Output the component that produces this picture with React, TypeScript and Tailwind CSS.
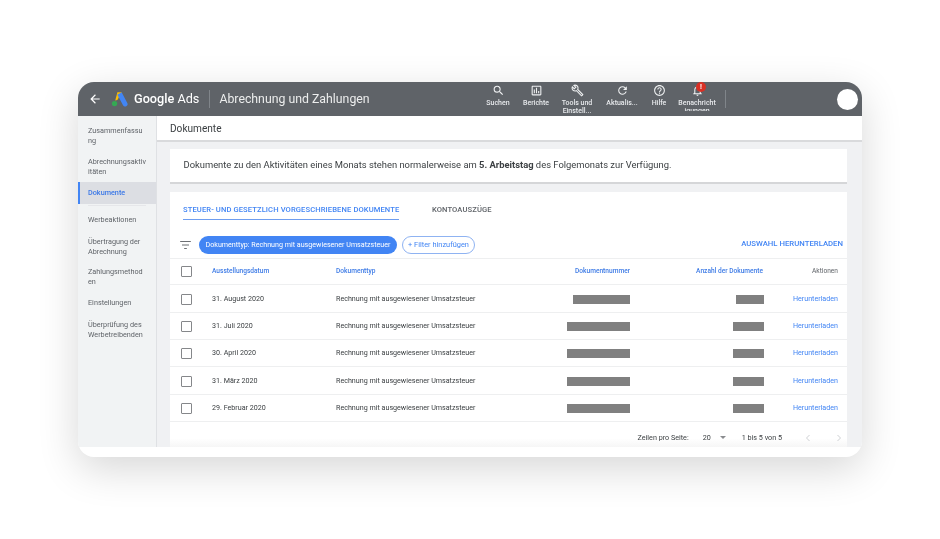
import React from "react";

const Ico = ({ d, className = "w-3 h-3" }: { d: string; className?: string }) => (
  <svg viewBox="0 0 24 24" className={className} fill="currentColor"><path d={d} /></svg>
);

const tools = [
  { label: "Suchen", w: "w-[38px]", d: "M15.5 14h-.79l-.28-.27A6.471 6.471 0 0 0 16 9.5 6.5 6.5 0 1 0 9.5 16c1.61 0 3.09-.59 4.23-1.57l.27.28v.79l5 4.99L20.49 19l-4.99-5zm-6 0C7.01 14 5 11.99 5 9.5S7.01 5 9.5 5 14 7.01 14 9.5 11.99 14 9.5 14z" },
  { label: "Berichte", w: "w-[38px]", d: "M19 3H5c-1.1 0-2 .9-2 2v14c0 1.1.9 2 2 2h14c1.1 0 2-.9 2-2V5c0-1.1-.9-2-2-2zm0 16H5V5h14v14zM7 10h2v7H7zm4-3h2v10h-2zm4 6h2v4h-2z" },
  { label: "Tools und Einstell...", w: "w-[44px]", d: "M22.61 18.99l-9.08-9.08c.93-2.34.45-5.1-1.44-7C9.79.61 6.21.4 3.66 2.25L7.5 6.1 6.08 7.51 2.25 3.69C.39 6.23.6 9.82 2.9 12.11c1.86 1.86 4.57 2.35 6.89 1.48l9.11 9.11c.39.39 1.02.39 1.41 0l2.3-2.3c.4-.38.4-1.01 0-1.41zm-3 1.6l-9.46-9.46c-.61.45-1.29.72-2 .82-1.36.2-2.79-.21-3.83-1.25C3.37 9.76 2.93 8.5 3 7.26l3.09 3.09 4.24-4.24-3.09-3.09c1.24-.07 2.49.37 3.44 1.31 1.08 1.08 1.49 2.57 1.24 3.96-.12.71-.42 1.37-.88 1.96l9.45 9.45-.88.88z" },
  { label: "Aktualis...", w: "w-[46px]", d: "M17.65 6.35A7.958 7.958 0 0 0 12 4c-4.42 0-7.99 3.58-7.99 8s3.57 8 7.99 8c3.73 0 6.84-2.55 7.73-6h-2.08A5.99 5.99 0 0 1 12 18c-3.31 0-6-2.69-6-6s2.69-6 6-6c1.66 0 3.14.69 4.22 1.78L13 11h7V4l-2.35 2.35z" },
  { label: "Hilfe", w: "w-[28px]", d: "M11 18h2v-2h-2v2zm1-16C6.48 2 2 6.48 2 12s4.48 10 10 10 10-4.48 10-10S17.52 2 12 2zm0 18c-4.41 0-8-3.59-8-8s3.59-8 8-8 8 3.59 8 8-3.59 8-8 8zm0-14c-2.21 0-4 1.79-4 4h2c0-1.1.9-2 2-2s2 .9 2 2c0 2-3 1.75-3 5h2c0-2.25 3-2.5 3-5 0-2.21-1.79-4-4-4z" },
];
const bell = "M12 22c1.1 0 2-.9 2-2h-4c0 1.1.89 2 2 2zm6-6v-5c0-3.07-1.64-5.64-4.5-6.32V4c0-.83-.67-1.5-1.5-1.5s-1.5.67-1.5 1.5v.68C7.63 5.36 6 7.92 6 11v5l-2 2v1h16v-1l-2-2zm-2 1H8v-6c0-2.48 1.51-4.5 4-4.5s4 2.02 4 4.5v6z";

const nav: { t: string[]; active?: boolean; h: string }[] = [
  { t: ["Zusammenfassu", "ng"], h: "h-[31px]" },
  { t: ["Abrechnungsaktiv", "itäten"], h: "h-[31px]" },
  { t: ["Dokumente"], active: true, h: "h-[22px]" },
];
const nav2: { t: string[]; h: string }[] = [
  { t: ["Werbeaktionen"], h: "h-[22px]" },
  { t: ["Übertragung der", "Abrechnung"], h: "h-[31px]" },
  { t: ["Zahlungsmethod", "en"], h: "h-[29px]" },
  { t: ["Einstellungen"], h: "h-[24px]" },
  { t: ["Überprüfung des", "Werbetreibenden"], h: "h-[29px]" },
];

const rows = [
  { date: "31. August 2020", a: "w-[57px]", b: "w-[28px]" },
  { date: "31. Juli 2020", a: "w-[63px]", b: "w-[31px]" },
  { date: "30. April 2020", a: "w-[63px]", b: "w-[31px]" },
  { date: "31. März 2020", a: "w-[63px]", b: "w-[31px]" },
  { date: "29. Februar 2020", a: "w-[63px]", b: "w-[31px]" },
];

const cols = "grid grid-cols-[42px_124px_170px_124px_134px_74px] items-center";
const Check = () => <span className="ml-[11px] block w-[11px] h-[11px] border border-[#85878a] rounded-[1px]" />;

export default function App() {
  return (
    <div className="w-[940px] h-[539px] bg-white overflow-hidden pt-[82px] pl-[78px] font-['Roboto',sans-serif] blur-[0.4px]">
      <div className="w-[784px] h-[375px] rounded-[16px] overflow-hidden flex flex-col bg-white shadow-[0_12px_40px_rgba(0,0,0,0.16)]">
        {/* header */}
        <header className="h-[34px] shrink-0 bg-[#5f6368] flex items-center text-white overflow-hidden relative">
          <svg viewBox="0 0 24 24" className="ml-[10px] w-[14px] h-[14px]" fill="currentColor"><path d="M20 11H7.83l5.59-5.59L12 4l-8 8 8 8 1.41-1.41L7.83 13H20v-2z" /></svg>
          <svg viewBox="0 0 24 22" className="ml-[9px] w-[17px] h-[16px]">
            <path d="M9 1.5h6l-6 11-3 .5z" fill="#fbbc04" />
            <path d="M15 1.5l8 15a3.4 3.4 0 0 1-6 3.2L9 5z" fill="#4285f4" />
            <circle cx="5" cy="17.5" r="3.8" fill="#34a853" />
          </svg>
          <span className="ml-[6px] text-[12.7px] font-medium whitespace-nowrap">Google <span className="font-normal">Ads</span></span>
          <span className="ml-[10px] w-px h-[18px] bg-[#80858a]" />
          <span className="ml-[9px] text-[12.3px] text-[#eceded] whitespace-nowrap">Abrechnung und Zahlungen</span>
          <div className="ml-auto flex items-start h-[34px] pt-[2px]">
            {tools.map((t) => (
              <div key={t.label} className={`${t.w} flex flex-col items-center text-center`}>
                <Ico d={t.d} className="w-[13px] h-[13px] text-[#eef0f1] mb-[2px]" />
                <span className="text-[7px] leading-[8px] font-medium text-[#e8eaed]">{t.label}</span>
              </div>
            ))}
            <div className="w-[48px] flex flex-col items-center text-center relative">
              <Ico d={bell} className="w-[13px] h-[13px] text-[#eef0f1] mb-[2px]" />
              <span className="absolute left-[23px] -top-[2px] w-[10px] h-[10px] rounded-full bg-[#d93025] text-[7px] leading-[10px] font-bold">!</span>
              <div className="h-[12px] overflow-hidden flex flex-col text-[7px] leading-[8px] font-medium text-[#e8eaed] whitespace-nowrap">
                <span>Benachricht</span>
                <span>igungen</span>
              </div>
            </div>
          </div>
          <span className="ml-[4px] w-px h-[18px] bg-[#80858a]" />
          <span className="ml-[111px] mr-[4px] w-[21px] h-[21px] rounded-full bg-white" />
        </header>

        <div className="flex flex-1 min-h-0">
          {/* sidebar */}
          <aside className="w-[79px] shrink-0 h-[331px] bg-[#f1f3f4] border-r border-[#dfe1e4] pt-[4px] text-[7.25px] leading-[9.5px] text-[#5f6368]">
            {nav.map((n) => (
              <div key={n.t[0]} className={`${n.h} flex flex-col justify-center ${n.active ? "bg-[#dcdee3] border-l-2 border-[#4285f4] pl-[8px] text-[#3b78e7] font-medium" : "pl-[10px]"}`}>
                {n.t.map((l) => <span key={l} className="whitespace-nowrap">{l}</span>)}
              </div>
            ))}
            <div className="mx-[10px] mt-[1px] h-px bg-[#e6e7ea]" />
            <div className="pt-[3px]">
              {nav2.map((n) => (
                <div key={n.t[0]} className={`${n.h} flex flex-col justify-center pl-[10px]`}>
                  {n.t.map((l) => <span key={l} className="whitespace-nowrap">{l}</span>)}
                </div>
              ))}
            </div>
          </aside>

          {/* main */}
          <main className="flex-1 min-w-0 h-[331px] bg-[#f0f1f3] flex flex-col overflow-hidden">
            <div className="h-[26px] shrink-0 bg-white border-b-2 border-[#d9dadc] flex items-center pl-[13px] pt-[2px] text-[10.1px] text-[#3c4043]">Dokumente</div>
            <div className="ml-[13px] mr-[15px] mt-[7px] h-[35px] shrink-0 bg-white border-b-2 border-[#d5d6d8] flex items-center pl-[13.5px] text-[9.4px] text-[#3c4043] whitespace-nowrap">
              <span>Dokumente zu den Aktivitäten eines Monats stehen normalerweise am <b className="font-bold">5. Arbeitstag</b> des Folgemonats zur Verfügung.</span>
            </div>
            <section className="ml-[13px] mr-[15px] mt-[8px] flex-1 bg-white min-h-0 flex flex-col">
              {/* tabs */}
              <div className="h-[28px] shrink-0 flex items-end pl-[13px] text-[7.6px] font-medium tracking-[0.1px] whitespace-nowrap">
                <span className="h-[17px] pt-[1px] w-[216px] text-[#4285f4] border-b-[1.5px] border-[#6d9df0]">STEUER- UND GESETZLICH VORGESCHRIEBENE DOKUMENTE</span>
                <span className="h-[17px] pt-[1px] ml-[33px] text-[#5f6368]">KONTOAUSZÜGE</span>
              </div>
              {/* filter row */}
              <div className="h-[39px] shrink-0 flex items-center pl-[10px] pr-[4px] pt-[12px] border-b border-[#eeeff0]">
                <svg viewBox="0 0 12 9" className="w-[11px] h-[8px] text-[#6d7074]" fill="currentColor"><path d="M0 0h12v1H0zM2 4h8v1H2zM4.5 8h3v1h-3z" /></svg>
                <span className="ml-[8px] h-[18px] w-[198px] rounded-full bg-[#4285f4] text-white text-[7.13px] flex items-center justify-center whitespace-nowrap">Dokumenttyp: Rechnung mit ausgewiesener Umsatzsteuer</span>
                <span className="ml-[5px] h-[18px] w-[73px] rounded-full border border-[#8fb3f2] text-[#4285f4] text-[7.4px] flex items-center justify-center whitespace-nowrap">+ Filter hinzufügen</span>
                <span className="ml-auto mb-[2px] text-[7.75px] font-medium text-[#4285f4] whitespace-nowrap">AUSWAHL HERUNTERLADEN</span>
              </div>
              {/* table */}
              <div className={`${cols} h-[26.5px] border-b border-[#eeeff0] text-[6.6px] font-medium text-[#3f7ce6]`}>
                <Check />
                <span>Ausstellungsdatum</span>
                <span>Dokumenttyp</span>
                <span className="text-right whitespace-nowrap">Dokumentnummer</span>
                <span className="text-right pr-[1px] whitespace-nowrap">Anzahl der Dokumente</span>
                <span className="text-right text-[#5f6368] font-normal">Aktionen</span>
              </div>
              {rows.map((r) => (
                <div key={r.date} className={`${cols} h-[27.4px] pt-[1px] border-b border-[#eeeff0] text-[7.15px] text-[#3c4043]`}>
                  <Check />
                  <span>{r.date}</span>
                  <span className="whitespace-nowrap">Rechnung mit ausgewiesener Umsatzsteuer</span>
                  <span className={`${r.a} h-[9px] bg-[#808080] justify-self-end`} />
                  <span className={`${r.b} h-[9px] bg-[#808080] justify-self-end`} />
                  <span className="text-right text-[#4285f4]">Herunterladen</span>
                </div>
              ))}
              {/* pagination */}
              <div className="h-[25px] shrink-0 flex items-center justify-end pt-[7px] text-[7.2px] text-[#3c4043] bg-gradient-to-b from-white from-[65%] to-[#f6f6f6] whitespace-nowrap">
                <span>Zeilen pro Seite:</span>
                <span className="ml-[14px]">20</span>
                <span className="ml-[9px] w-0 h-0 border-x-[3px] border-x-transparent border-t-[3px] border-t-[#8a8c8f]" />
                <span className="ml-[16px]">1 bis 5 von 5</span>
                <svg viewBox="0 0 8 10" className="ml-[23px] w-[6px] h-[8px] text-[#bdc0c4]" fill="none" stroke="currentColor"><path d="M6 1L2 5l4 4" /></svg>
                <svg viewBox="0 0 8 10" className="ml-[25px] mr-[5px] w-[6px] h-[8px] text-[#bdc0c4]" fill="none" stroke="currentColor"><path d="M2 1l4 4-4 4" /></svg>
              </div>
            </section>
          </main>
        </div>
      </div>
    </div>
  );
}
